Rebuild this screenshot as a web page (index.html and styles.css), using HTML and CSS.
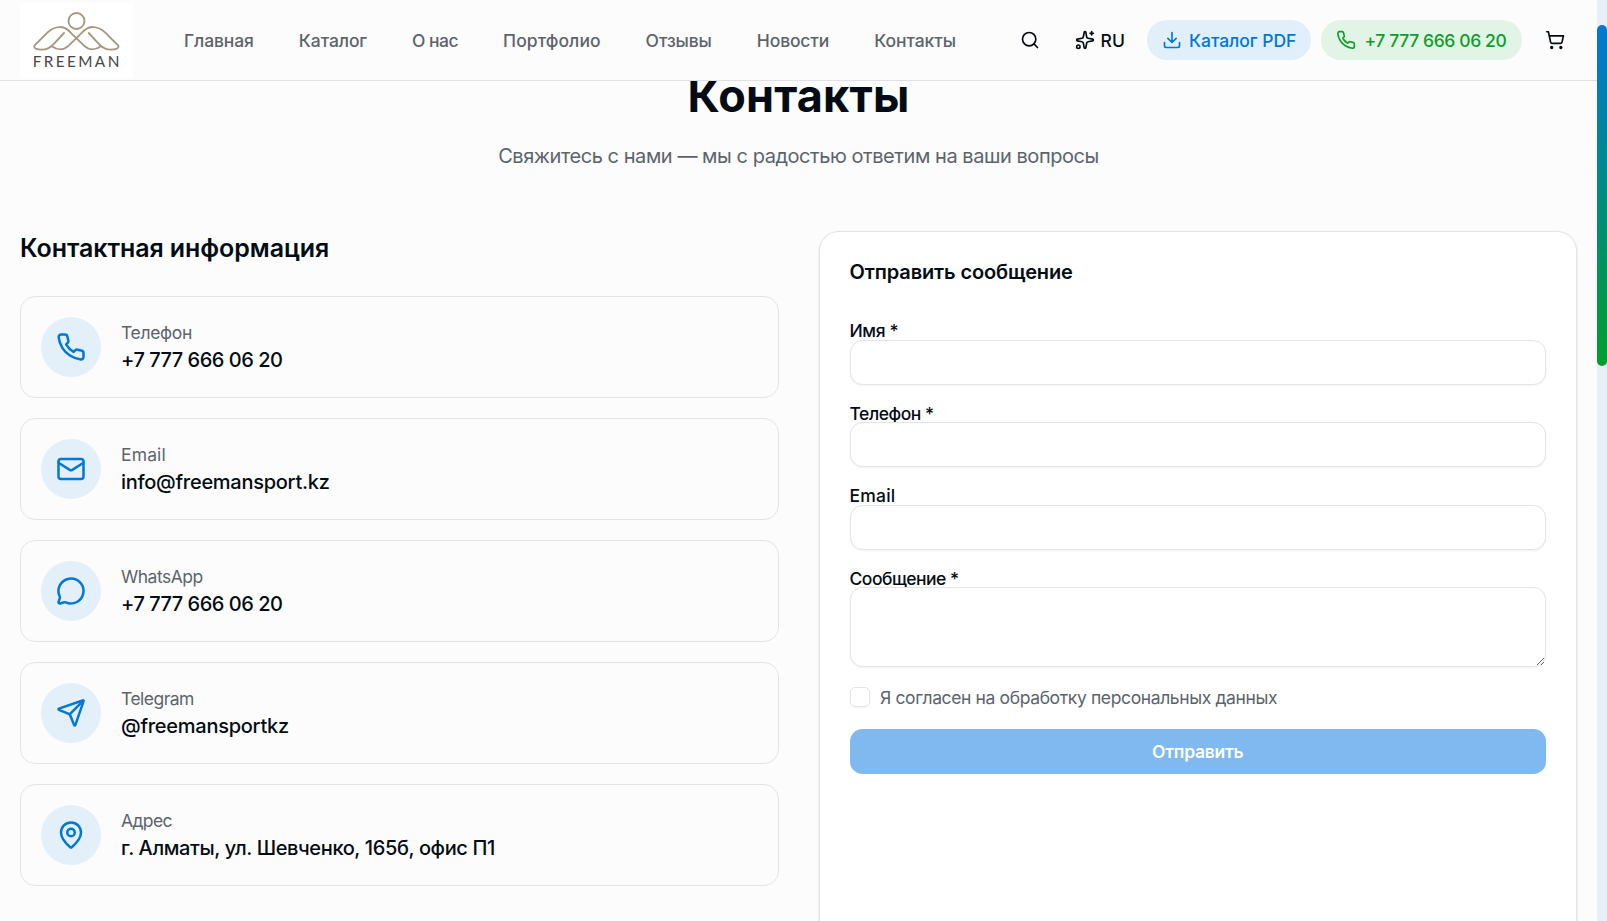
FILE: index.html
```
<!DOCTYPE html>
<html lang="ru">
<head>
<meta charset="utf-8">
<title>Контакты — Freeman</title>
<link rel="stylesheet" href="styles.css">
</head>
<body>
<svg class="sprite" aria-hidden="true">
  <symbol id="i-phone" viewBox="0 0 24 24"><path d="M22 16.92v3a2 2 0 0 1-2.18 2 19.79 19.79 0 0 1-8.63-3.07 19.5 19.5 0 0 1-6-6 19.79 19.79 0 0 1-3.07-8.67A2 2 0 0 1 4.11 2h3a2 2 0 0 1 2 1.72 12.84 12.84 0 0 0 .7 2.81 2 2 0 0 1-.45 2.11L8.09 9.91a16 16 0 0 0 6 6l1.27-1.27a2 2 0 0 1 2.11-.45 12.84 12.84 0 0 0 2.81.7A2 2 0 0 1 22 16.92z"/></symbol>
</svg>

<div class="window">
  <div class="page">
    <header class="header">
      <a class="logo" href="#">
        <svg viewBox="60 0 330 240" width="110" height="80">
          <g class="logo-mark">
            <circle cx="229.500" cy="63" r="24"/>
            <path d="M192 99 L163 130 C150 145 140 149 125 149 C112 149 98 145 104 136 L142 98 C165 76 192 75 212 98 L252 137 C266 150 284 152 303 139"/>
            <path d="M266 99 L295 130 C308 145 318 149 333 149 C346 149 360 145 354 136 L316 98 C293 76 266 75 246 98 L206 137 C192 150 174 152 155 139"/>
          </g>
          <text class="logo-text" x="98" y="201" textLength="260">FREEMAN</text>
        </svg>
      </a>
      <nav class="nav">
        <a class="n1" href="#">Главная</a>
        <a class="n2" href="#">Каталог</a>
        <a class="n3" href="#">О нас</a>
        <a class="n4" href="#">Портфолио</a>
        <a class="n5" href="#">Отзывы</a>
        <a class="n6" href="#">Новости</a>
        <a class="n7" href="#">Контакты</a>
      </nav>
      <div class="actions">
        <button class="icon-btn search" aria-label="Поиск"><svg class="ico" viewBox="0 0 24 24"><circle cx="11" cy="11" r="8"/><path d="m21 21-4.300-4.300"/></svg></button>
        <button class="lang"><svg class="ico" viewBox="0 0 24 24"><path d="M11.017 2.814a1 1 0 0 1 1.966 0l1.051 5.558a2 2 0 0 0 1.594 1.594l5.558 1.051a1 1 0 0 1 0 1.966l-5.558 1.051a2 2 0 0 0-1.594 1.594l-1.051 5.558a1 1 0 0 1-1.966 0l-1.051-5.558a2 2 0 0 0-1.594-1.594l-5.558-1.051a1 1 0 0 1 0-1.966l5.558-1.051a2 2 0 0 0 1.594-1.594z"/><path d="M20 2v4M22 4h-4"/><circle cx="4" cy="20" r="2"/></svg>RU</button>
        <a class="pill pill-blue" href="#"><svg class="ico" viewBox="0 0 24 24"><path d="M12 15V3M21 15v4a2 2 0 0 1-2 2H5a2 2 0 0 1-2-2v-4M7 10l5 5 5-5"/></svg>Каталог PDF</a>
        <a class="pill pill-green" href="#"><svg class="ico"><use href="#i-phone"/></svg>+7 777 666 06 20</a>
        <button class="icon-btn cart" aria-label="Корзина"><svg class="ico" viewBox="0 0 24 24"><circle cx="8" cy="21" r="1"/><circle cx="19" cy="21" r="1"/><path d="M2.050 2.050h2l2.660 12.420a2 2 0 0 0 2 1.580h9.780a2 2 0 0 0 1.950-1.570l1.650-7.430H5.120"/></svg></button>
      </div>
    </header>

    <main class="main">
      <h1 class="title">Контакты</h1>
      <p class="subtitle">Свяжитесь с нами — мы с радостью ответим на ваши вопросы</p>
      <div class="columns">
        <section class="info">
          <h2 class="info-title">Контактная информация</h2>
          <div class="cards">
            <a class="card" href="#">
              <span class="badge"><svg class="ico"><use href="#i-phone"/></svg></span>
              <span class="text"><span class="label l1">Телефон</span><span class="value v1">+7 777 666 06 20</span></span>
            </a>
            <a class="card" href="#">
              <span class="badge"><svg class="ico" viewBox="0 0 24 24"><rect x="2" y="4" width="20" height="16" rx="2"/><path d="m22 7-8.991 5.727a2 2 0 0 1-2.009 0L2 7"/></svg></span>
              <span class="text"><span class="label l2">Email</span><span class="value v2">info@freemansport.kz</span></span>
            </a>
            <a class="card" href="#">
              <span class="badge"><svg class="ico" viewBox="0 0 24 24"><path d="M2.992 16.342a2 2 0 0 1 .094 1.167l-1.065 3.290a1 1 0 0 0 1.236 1.168l3.413-.998a2 2 0 0 1 1.099.092 10 10 0 1 0-4.777-4.719"/></svg></span>
              <span class="text"><span class="label l3">WhatsApp</span><span class="value v1">+7 777 666 06 20</span></span>
            </a>
            <a class="card" href="#">
              <span class="badge"><svg class="ico" viewBox="0 0 24 24"><path d="M14.536 21.686a.5.5 0 0 0 .937-.024l6.500-19a.496.496 0 0 0-.635-.635l-19 6.500a.5.5 0 0 0-.024.937l7.930 3.180a2 2 0 0 1 1.112 1.110z"/><path d="m21.854 2.147-10.940 10.939"/></svg></span>
              <span class="text"><span class="label l4">Telegram</span><span class="value v4">@freemansportkz</span></span>
            </a>
            <a class="card" href="#">
              <span class="badge"><svg class="ico" viewBox="0 0 24 24"><path d="M20 10c0 4.993-5.539 10.193-7.399 11.799a1 1 0 0 1-1.202 0C9.539 20.193 4 14.993 4 10a8 8 0 0 1 16 0"/><circle cx="12" cy="10" r="3"/></svg></span>
              <span class="text"><span class="label l5">Адрес</span><span class="value v5">г. Алматы, ул. Шевченко, 165б, офис П1</span></span>
            </a>
          </div>
        </section>

        <form class="panel">
          <h3 class="panel-title">Отправить сообщение</h3>
          <div class="field"><label class="f1" for="name">Имя *</label><input id="name" class="control" type="text"></div>
          <div class="field"><label class="f2" for="phone">Телефон *</label><input id="phone" class="control" type="tel"></div>
          <div class="field"><label class="f3" for="email">Email</label><input id="email" class="control" type="email"></div>
          <div class="field"><label class="f4" for="msg">Сообщение *</label><textarea id="msg" class="control area"></textarea></div>
          <div class="consent"><span class="check"></span><span>Я согласен на обработку персональных данных</span></div>
          <button class="submit" type="button">Отправить</button>
        </form>
      </div>
    </main>
  </div>
  <div class="scrollbar"><div class="thumb"></div></div>
</div>
</body>
</html>
```

FILE: styles.css
```
* { box-sizing: border-box; margin: 0; padding: 0; }

body {
  background: #fcfcfc;
  color: #030c14;
  font-family: Inter, "Liberation Sans", sans-serif;
  font-size: 17.5px;
  line-height: 25px;
  overflow: hidden;
}

a { color: inherit; text-decoration: none; }
button { background: none; border: 0; color: inherit; font: inherit; }
.sprite { display: none; }

.ico {
  flex: none;
  width: 20px;
  height: 20px;
  fill: none;
  stroke: currentColor;
  stroke-width: 2;
  stroke-linecap: round;
  stroke-linejoin: round;
}

.window { display: flex; height: 921px; overflow: hidden; }
.page { flex: 1; min-width: 0; }

/* Header */
.header {
  position: relative;
  z-index: 2;
  display: flex;
  align-items: center;
  height: 81px;
  padding: 0 20px;
  background: #fcfcfc;
  border-bottom: 1px solid #dfe1e4;
  font-weight: 500;
  white-space: nowrap;
}
.logo { display: block; width: 113px; height: 75px; background: #fff; overflow: hidden; }
.logo svg { display: block; margin-top: -3px; }
.logo-mark { fill: none; stroke: #a5977f; stroke-width: 5.5; stroke-linecap: round; }
.logo-text { font: 400 46px Lato, sans-serif; fill: #46464a; }

.nav { display: flex; gap: 45px; margin-left: 51px; padding-top: 1px; color: #5c646b; }
.n1 { letter-spacing: -0.006em; }
.n2 { letter-spacing: -0.0052em; }
.n3 { letter-spacing: -0.0292em; }
.n4 { letter-spacing: 0.003em; }
.n5 { letter-spacing: -0.0061em; }
.n6 { letter-spacing: -0.0082em; }
.n7 { letter-spacing: -0.0046em; }

.actions { display: flex; align-items: center; margin-left: auto; }
.icon-btn { display: flex; align-items: center; justify-content: center; width: 45px; height: 45px; }
.lang { display: flex; align-items: center; gap: 5px; padding: 0 22px 0 32px; letter-spacing: 0.009em; }
.search { width: 20px; }
.search + .lang { margin-left: 3px; }
.pill { display: flex; align-items: center; gap: 7px; height: 40px; border-radius: 20px; }
.pill-blue { width: 164px; padding-left: 15px; background: #e1effb; color: #0078d4; letter-spacing: -0.0017em; }
.pill-green { width: 201px; margin-left: 10px; padding-left: 15px; gap: 8.5px; background: #e1f4e5; color: #0f9d2b; letter-spacing: -0.0219em; }
.cart { margin-left: 10px; }

/* Page heading */
.main { padding: 0 20px; }
.title {
  margin-top: -13px;
  font-size: 45px;
  font-weight: 700;
  line-height: 56px;
  text-align: center;
  letter-spacing: 0.004em;
}
.subtitle {
  margin-top: 18px;
  font-size: 20px;
  line-height: 28px;
  text-align: center;
  letter-spacing: -0.0225em;
  color: #5c646b;
}

.columns { display: grid; grid-template-columns: 1fr 1fr; gap: 40px; margin-top: 61px; }

/* Contact cards */
.info-title { font-size: 25px; font-weight: 600; line-height: 35px; letter-spacing: -0.003em; }
.cards { display: grid; gap: 20px; margin-top: 30px; }
.card {
  display: flex;
  align-items: center;
  gap: 20px;
  height: 102px;
  padding: 0 20px;
  border: 1px solid #e2e4e7;
  border-radius: 15px;
}
.badge {
  display: flex;
  align-items: center;
  justify-content: center;
  width: 60px;
  height: 60px;
  border-radius: 50%;
  background: #e3f0fa;
  color: #0078d4;
}
.badge .ico { width: 30px; height: 30px; }
.text { display: flex; flex-direction: column; }
.label { line-height: 25px; color: #5c646b; }
.value { font-size: 20px; font-weight: 500; line-height: 30px; }
.l1 { letter-spacing: -0.0187em; }
.l2 { letter-spacing: 0.0085em; }
.l3 { letter-spacing: -0.0286em; }
.l4 { letter-spacing: -0.0304em; }
.l5 { letter-spacing: -0.035em; }
.v1 { letter-spacing: -0.0242em; }
.v2 { letter-spacing: -0.0135em; }
.v4 { letter-spacing: -0.013em; }
.v5 { letter-spacing: -0.0191em; }

/* Message form */
.panel {
  height: 760px;
  padding: 26px 30px;
  background: #fff;
  border: 1px solid #e2e4e7;
  border-radius: 20px;
  box-shadow: 0 1px 3px rgba(0, 0, 0, 0.1);
}
.panel-title { margin-bottom: 36px; font-size: 20px; font-weight: 600; line-height: 28px; letter-spacing: -0.006em; }
.field { display: flex; flex-direction: column; margin-bottom: 20px; }
.field label { height: 17.5px; line-height: 17.5px; font-weight: 500; }
.f1 { letter-spacing: -0.0209em; }
.f2 { letter-spacing: -0.0268em; }
.f3 { letter-spacing: 0.0121em; }
.f4 { letter-spacing: -0.0285em; }
.control {
  width: 100%;
  height: 45px;
  background: #fff;
  border: 1px solid #e2e4e7;
  border-radius: 12.5px;
  box-shadow: 0 1px 2px rgba(0, 0, 0, 0.05);
}
.area { height: 80px; resize: vertical; }
.consent { display: flex; align-items: center; gap: 10.5px; height: 20px; color: #5c646b; letter-spacing: -0.0213em; }
.check { width: 20px; height: 20px; border: 1px solid #e2e4e7; border-radius: 5px; box-shadow: 0 1px 2px rgba(0, 0, 0, 0.05); }
.submit {
  display: block;
  width: 100%;
  height: 45px;
  margin-top: 22px;
  border-radius: 12.5px;
  background: #80b9ef;
  color: #fff;
  font-weight: 600;
  letter-spacing: -0.0149em;
}

/* Scrollbar */
.scrollbar { width: 10px; padding-top: 25px; background: #e9eff7; }
.thumb { height: 341px; border-radius: 5px; background: linear-gradient(#0078d4, #00a02c); }
```
